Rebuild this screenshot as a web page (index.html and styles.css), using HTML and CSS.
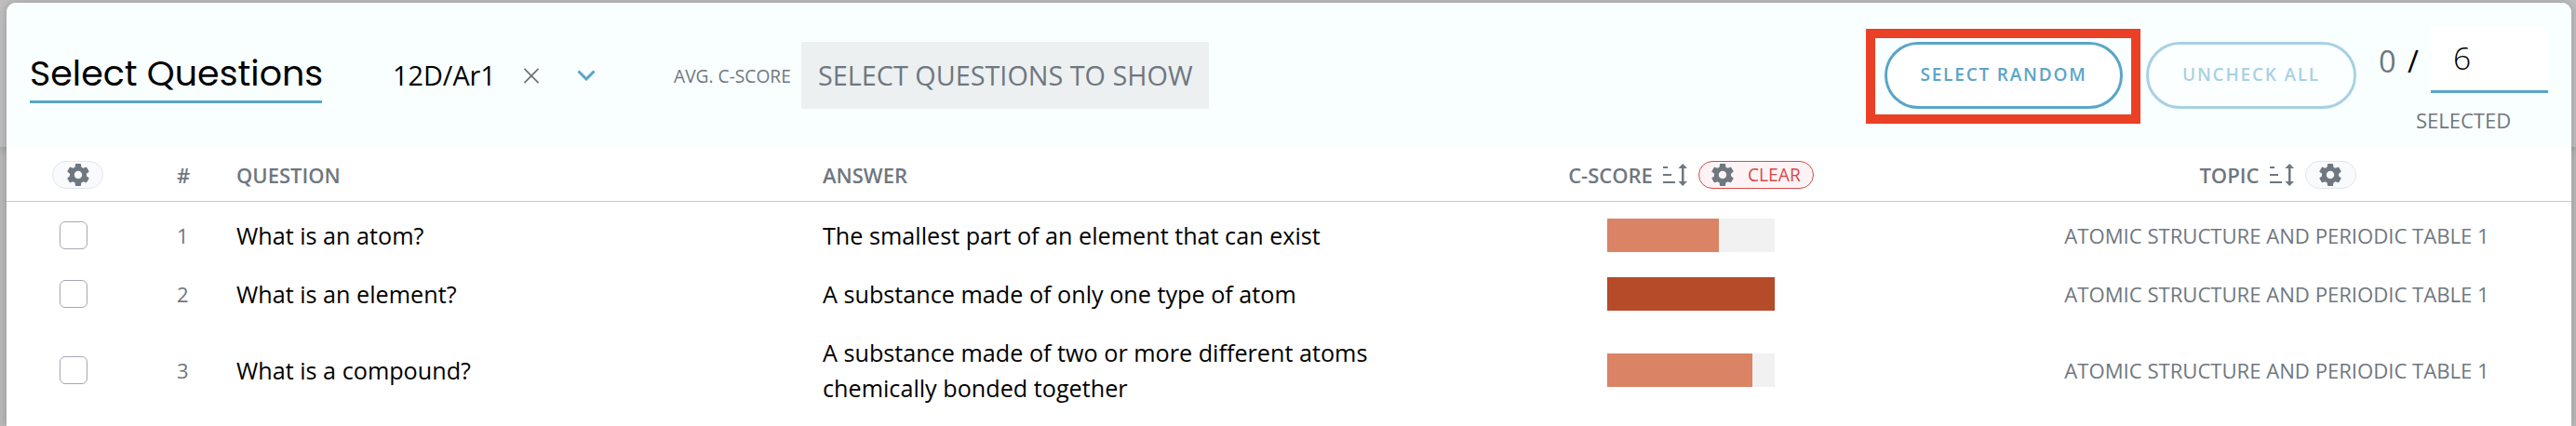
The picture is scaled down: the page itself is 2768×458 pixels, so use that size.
FILE: index.html
```
<!DOCTYPE html>
<html lang="en">
<head>
    <meta charset="UTF-8">
    <meta name="viewport" content="width=device-width, initial-scale=1.0">
    <title>Select Questions</title>
    <link rel="stylesheet" href="styles.css">
</head>
<body>
    <!-- shared icons -->
    <svg class="icon-defs">
        <symbol id="gear" viewBox="2 2 20 20">
            <path d="M19.43 12.98c.04-.32.07-.64.07-.98s-.03-.66-.07-.98l2.11-1.65c.19-.15.24-.42.12-.64l-2-3.46c-.12-.22-.39-.3-.61-.22l-2.49 1c-.52-.4-1.08-.73-1.69-.98l-.38-2.65C14.46 2.18 14.25 2 14 2h-4c-.25 0-.46.18-.49.42l-.38 2.65c-.61.25-1.17.59-1.69.98l-2.49-1c-.23-.09-.49 0-.61.22l-2 3.46c-.13.22-.07.49.12.64l2.11 1.65c-.04.32-.07.65-.07.98s.03.66.07.98l-2.11 1.65c-.19.15-.24.42-.12.64l2 3.46c.12.22.39.3.61.22l2.49-1c.52.4 1.08.73 1.69.98l.38 2.65c.03.24.24.42.49.42h4c.25 0 .46-.18.49-.42l.38-2.65c.61-.25 1.17-.59 1.69-.98l2.49 1c.23.09.49 0 .61-.22l2-3.46c.12-.22.07-.49-.12-.64l-2.11-1.65zM12 15.5c-1.93 0-3.5-1.57-3.5-3.5s1.57-3.5 3.5-3.5 3.5 1.57 3.5 3.5-1.57 3.5-3.5 3.5z"/>
        </symbol>
        <symbol id="sort" viewBox="0 0 26 24">
            <path d="M0 3h5v2H0zM0 11h9v2H0zM0 19h13v2H0zM20 4h2.500v16H20z"/>
            <path d="M21.200 0l4.800 5h-9.600zM21.200 24l-4.800-5h9.600z"/>
        </symbol>
    </svg>

    <div class="backdrop"></div>
    <div class="modal">
        <div class="header">
            <h1 class="title">Select Questions</h1>
            <div class="class-select">
                <span class="class-name">12D/Ar1</span>
                <svg class="clear-icon" viewBox="0 0 18 18"><path d="M1 1l16 16M17 1L1 17"/></svg>
                <svg class="chevron-icon" viewBox="0 0 20 12"><path d="M1.5 1.5L10 10l8.500-8.500"/></svg>
            </div>
            <span class="avg-label">AVG. C-SCORE</span>
            <span class="avg-value">SELECT QUESTIONS TO SHOW</span>
            <div class="actions">
                <div class="random-outline">
                    <button class="button">SELECT RANDOM</button>
                </div>
                <button class="button uncheck" disabled>UNCHECK ALL</button>
                <div class="selected">
                    <div class="selected-count">
                        <span class="count">0</span>
                        <span class="slash">/</span>
                        <input class="count-input" type="text" value="6">
                    </div>
                    <span class="selected-label">SELECTED</span>
                </div>
            </div>
        </div>

        <div class="row table-head">
            <div class="cell-check"><span class="pill"><svg class="gear"><use href="#gear"/></svg></span></div>
            <div class="cell-num">#</div>
            <div class="cell-question">QUESTION</div>
            <div class="cell-answer">ANSWER</div>
            <div class="cell-score">
                <span>C-SCORE</span>
                <svg class="sort"><use href="#sort"/></svg>
                <span class="pill pill-clear"><svg class="gear"><use href="#gear"/></svg>CLEAR</span>
            </div>
            <div class="cell-topic">
                <span>TOPIC</span>
                <svg class="sort"><use href="#sort"/></svg>
                <span class="pill"><svg class="gear"><use href="#gear"/></svg></span>
            </div>
        </div>

        <div class="table-body">
            <div class="row">
                <div class="cell-check"><input class="checkbox" type="checkbox"></div>
                <div class="cell-num">1</div>
                <div class="cell-question">What is an atom?</div>
                <div class="cell-answer">The smallest part of an element that can exist</div>
                <div class="cell-score"><div class="bar"><div class="bar-fill" style="width: 66.67%"></div></div></div>
                <div class="cell-topic">ATOMIC STRUCTURE AND PERIODIC TABLE 1</div>
            </div>
            <div class="row">
                <div class="cell-check"><input class="checkbox" type="checkbox"></div>
                <div class="cell-num">2</div>
                <div class="cell-question">What is an element?</div>
                <div class="cell-answer">A substance made of only one type of atom</div>
                <div class="cell-score"><div class="bar"><div class="bar-fill full" style="width: 100%"></div></div></div>
                <div class="cell-topic">ATOMIC STRUCTURE AND PERIODIC TABLE 1</div>
            </div>
            <div class="row">
                <div class="cell-check"><input class="checkbox" type="checkbox"></div>
                <div class="cell-num">3</div>
                <div class="cell-question">What is a compound?</div>
                <div class="cell-answer">A substance made of two or more different atoms chemically bonded together</div>
                <div class="cell-score"><div class="bar"><div class="bar-fill" style="width: 86.67%"></div></div></div>
                <div class="cell-topic">ATOMIC STRUCTURE AND PERIODIC TABLE 1</div>
            </div>
        </div>
    </div>
</body>
</html>
```
FILE: styles.css
```
* {
    box-sizing: border-box;
}

body {
    margin: 0;
    padding: 3px 5px 0 7px;
    height: 458px;
    overflow: hidden;
    background-color: #bababa;
    font-family: 'Open Sans', sans-serif;
    color: #000;
}

.icon-defs {
    display: none;
}

/* page header strip showing behind the modal */
.backdrop {
    position: absolute;
    top: 0;
    left: 0;
    width: 100%;
    height: 158px;
    background-color: #bfbfbf;
    box-shadow: 0 2px 10px rgba(0, 0, 0, 0.2);
}

.modal {
    position: relative;
    height: 455px;
    border-radius: 10px 10px 0 0;
    background-color: #fff;
    box-shadow: 0 0 12px rgba(0, 0, 0, 0.2);
    overflow: hidden;
}

.header {
    display: flex;
    align-items: flex-start;
    height: 156px;
    padding: 0 25px;
    background-color: #f9ffff;
}

.title {
    width: 314px;
    height: 60px;
    margin: 48px 0 0;
    border-bottom: 3px solid #5aa5c8;
    font-family: 'Poppins', 'Inter', sans-serif;
    font-size: 38px;
    font-weight: 400;
    line-height: 55px;
    white-space: nowrap;
}

.class-select {
    display: flex;
    align-items: center;
    height: 72px;
    margin: 42px 0 0 76px;
}

.class-name {
    width: 108px;
    padding-bottom: 2px;
    font-size: 28.8px;
}

.clear-icon {
    width: 18px;
    height: 17px;
    margin-left: 32px;
    fill: none;
    stroke: #777;
    stroke-width: 2;
}

.chevron-icon {
    width: 20px;
    height: 12px;
    margin-left: 40px;
    fill: none;
    stroke: #5aa5c8;
    stroke-width: 3;
}

.avg-label {
    width: 137px;
    margin: 42px 0 0 84px;
    font-size: 19.2px;
    line-height: 74px;
    color: #6f7780;
    white-space: nowrap;
}

.avg-value {
    width: 438px;
    height: 72px;
    margin-top: 42px;
    padding-left: 18px;
    background-color: #ecf0f1;
    font-size: 28.8px;
    line-height: 71px;
    color: #6f7780;
    white-space: nowrap;
}

.actions {
    display: flex;
    align-items: flex-start;
    margin-left: auto;
}

.random-outline {
    width: 295px;
    height: 102px;
    margin-top: 28px;
    padding: 4px 10px;
    border: 10px solid #ea4025;
}

.button {
    width: 256px;
    height: 72px;
    padding: 0 0 2px;
    border: 3px solid #5aa5c8;
    border-radius: 36px;
    background-color: #fff;
    font-family: inherit;
    font-size: 19px;
    font-weight: 600;
    letter-spacing: 1.8px;
    color: #5aa5c8;
}

.uncheck {
    width: 226px;
    margin: 42px 0 0 6px;
    opacity: 0.5;
}

.selected {
    display: flex;
    flex-direction: column;
    width: 182px;
    margin: 25px 0 0 24px;
}

.selected-count {
    display: flex;
    height: 72px;
}

.count,
.slash {
    font-size: 32.5px;
    line-height: 75px;
    color: #6f7780;
}

.count {
    width: 31px;
}

.slash {
    width: 25px;
    font-weight: 500;
    color: #000;
}

.count-input {
    width: 126px;
    height: 72px;
    padding: 0 24px 2px;
    border: 0;
    border-bottom: 3px solid #5aa5c8;
    background-color: #fff;
    font-family: inherit;
    font-size: 33.6px;
    font-weight: 300;
    color: #000;
}

.selected-label {
    margin: 12px 0 0 40px;
    font-size: 22px;
    line-height: 34px;
    color: #6f7780;
}

.row {
    display: grid;
    grid-template-columns: 182px 65px 630px 618px 630px 631px;
    align-items: center;
    padding: 12.5px 0;
    font-size: 25.2px;
    line-height: 38px;
}

.table-head {
    position: relative;
    height: 58px;
    padding: 0;
    border-bottom: 1px solid #c3c8de;
    box-shadow: 0 34px 24px -30px rgba(90, 100, 150, 0.12);
    font-size: 22px;
    font-weight: 600;
    color: #6f7780;
}

.table-body {
    padding-top: 4px;
}

.cell-check {
    padding-left: 57px;
}

.cell-num {
    padding-left: 1px;
    font-size: 22px;
    color: #6f7780;
}

.cell-score,
.cell-topic {
    display: flex;
    align-items: center;
    justify-content: center;
}

.cell-topic {
    font-size: 22.1px;
    color: #6f7780;
}

.table-body .cell-topic {
    padding-right: 2px;
}

.table-head .cell-check {
    padding-left: 49px;
}

.sort {
    width: 26px;
    height: 24px;
    margin: 0 12px 0 11px;
    fill: #6f7780;
}

.pill {
    display: flex;
    align-items: center;
    justify-content: center;
    width: 55px;
    height: 30px;
    border: 1px solid #e2e5ee;
    border-radius: 15px;
    background-color: #f9fafc;
}

.gear {
    width: 24px;
    height: 24px;
    fill: #6f7780;
}

.pill-clear {
    gap: 15px;
    width: 124px;
    border-color: #d64a4a;
    background-color: #fdf3f4;
    font-size: 19.2px;
    font-weight: 400;
    color: #d64a4a;
}

.checkbox {
    display: block;
    width: 30px;
    height: 30px;
    margin: 0;
    appearance: none;
    border: 1px solid #a5a8b5;
    border-radius: 6px;
    background-color: #fff;
}

.bar {
    width: 180px;
    height: 36px;
    background-color: #f1f1f1;
}

.bar-fill {
    height: 100%;
    background-color: #db8365;
}

.bar-fill.full {
    background-color: #b54b29;
}
```
